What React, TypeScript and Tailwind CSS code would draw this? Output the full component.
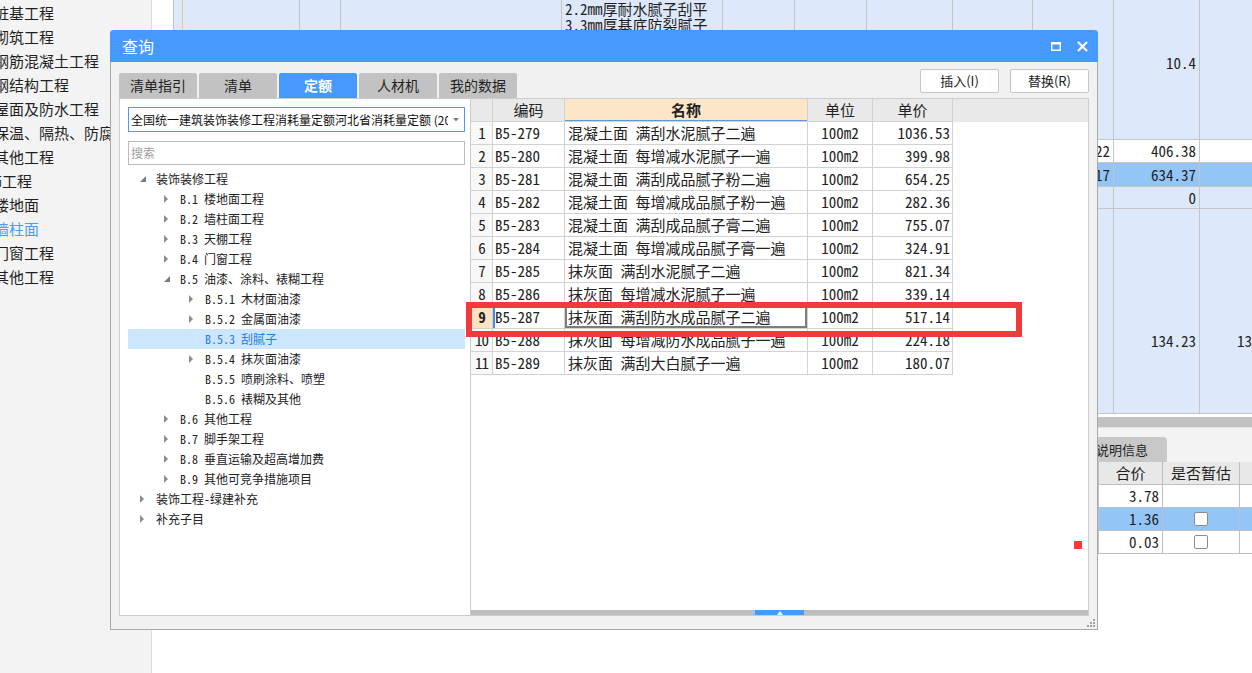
import React from 'react'

const SANS = "font-['Noto_Sans_CJK_SC',sans-serif]"
const MONO = "font-['Noto_Sans_Mono_CJK_SC','Noto_Sans_CJK_SC',monospace]"

// left sidebar items, cut off at the window edge
const SIDEBAR: { t: string; off: string; blue?: boolean }[] = [
  { t: '桩基工程', off: '-ml-[6px]' },
  { t: '砌筑工程', off: '-ml-[6px]' },
  { t: '钢筋混凝土工程', off: '-ml-[6px]' },
  { t: '钢结构工程', off: '-ml-[6px]' },
  { t: '屋面及防水工程', off: '-ml-[6px]' },
  { t: '保温、隔热、防腐', off: '-ml-[6px]' },
  { t: '其他工程', off: '-ml-[6px]' },
  { t: '饰工程', off: '-ml-[13px]' },
  { t: '楼地面', off: '-ml-[6px]' },
  { t: '墙柱面', off: '-ml-[6px]', blue: true },
  { t: '门窗工程', off: '-ml-[6px]' },
  { t: '其他工程', off: '-ml-[6px]' },
]

// background grid behind the dialog
const COLS = ['w-[22px]', 'w-[126px]', 'w-[41px]', 'w-[221px]', 'w-[161px]', 'w-[72px]', 'w-[72px]', 'w-[86px]', 'w-[80px]', 'w-[81px]', 'w-[86px]', 'w-[86px]']

const BG_ROWS: { h: string; bg: string; cells: Record<number, React.ReactNode> }[] = [
  {
    h: 'h-[140px]',
    bg: 'bg-[#dde9fb]',
    cells: {
      4: (
        <div className="pl-[3px] pt-px leading-[16px]">
          <div>2.2mm厚耐水腻子刮平</div>
          <div>3.3mm厚基底防裂腻子</div>
        </div>
      ),
      10: <div className="pt-[52px] pr-[3px] text-right">10.4</div>,
    },
  },
  {
    h: 'h-[23px]',
    bg: 'bg-white',
    cells: {
      9: <div className="pr-[3px] text-right leading-[22px]">5.22</div>,
      10: <div className="pr-[3px] text-right leading-[22px]">406.38</div>,
    },
  },
  {
    h: 'h-[24px]',
    bg: 'bg-[#93c6f6]',
    cells: {
      9: <div className="pr-[3px] text-right leading-[23px]">7.17</div>,
      10: <div className="pr-[3px] text-right leading-[23px]">634.37</div>,
    },
  },
  {
    h: 'h-[22px]',
    bg: 'bg-[#dde9fb]',
    cells: { 10: <div className="pr-[3px] text-right leading-[21px]">0</div> },
  },
  {
    h: 'h-[205px]',
    bg: 'bg-[#dde9fb]',
    cells: {
      10: <div className="pt-[121px] pr-[3px] text-right">134.23</div>,
      11: <div className="pt-[121px] pr-[3px] text-right">134.23</div>,
    },
  },
]

const TREE: { lvl: 0 | 1 | 2; exp: 'open' | 'closed' | 'none'; t: string; sel?: boolean }[] = [
  { lvl: 0, exp: 'open', t: '装饰装修工程' },
  { lvl: 1, exp: 'closed', t: 'B.1 楼地面工程' },
  { lvl: 1, exp: 'closed', t: 'B.2 墙柱面工程' },
  { lvl: 1, exp: 'closed', t: 'B.3 天棚工程' },
  { lvl: 1, exp: 'closed', t: 'B.4 门窗工程' },
  { lvl: 1, exp: 'open', t: 'B.5 油漆、涂料、裱糊工程' },
  { lvl: 2, exp: 'closed', t: 'B.5.1 木材面油漆' },
  { lvl: 2, exp: 'closed', t: 'B.5.2 金属面油漆' },
  { lvl: 2, exp: 'none', t: 'B.5.3 刮腻子', sel: true },
  { lvl: 2, exp: 'closed', t: 'B.5.4 抹灰面油漆' },
  { lvl: 2, exp: 'none', t: 'B.5.5 喷刷涂料、喷塑' },
  { lvl: 2, exp: 'none', t: 'B.5.6 裱糊及其他' },
  { lvl: 1, exp: 'closed', t: 'B.6 其他工程' },
  { lvl: 1, exp: 'closed', t: 'B.7 脚手架工程' },
  { lvl: 1, exp: 'closed', t: 'B.8 垂直运输及超高增加费' },
  { lvl: 1, exp: 'closed', t: 'B.9 其他可竞争措施项目' },
  { lvl: 0, exp: 'closed', t: '装饰工程-绿建补充' },
  { lvl: 0, exp: 'closed', t: '补充子目' },
]

const INDENT = ['pl-[12px]', 'pl-[36px]', 'pl-[61px]']

const QUOTA = [
  ['B5-279', '混凝土面 满刮水泥腻子二遍', '100m2', '1036.53'],
  ['B5-280', '混凝土面 每增减水泥腻子一遍', '100m2', '399.98'],
  ['B5-281', '混凝土面 满刮成品腻子粉二遍', '100m2', '654.25'],
  ['B5-282', '混凝土面 每增减成品腻子粉一遍', '100m2', '282.36'],
  ['B5-283', '混凝土面 满刮成品腻子膏二遍', '100m2', '755.07'],
  ['B5-284', '混凝土面 每增减成品腻子膏一遍', '100m2', '324.91'],
  ['B5-285', '抹灰面 满刮水泥腻子二遍', '100m2', '821.34'],
  ['B5-286', '抹灰面 每增减水泥腻子一遍', '100m2', '339.14'],
  ['B5-287', '抹灰面 满刮防水成品腻子二遍', '100m2', '517.14'],
  ['B5-288', '抹灰面 每增减防水成品腻子一遍', '100m2', '224.18'],
  ['B5-289', '抹灰面 满刮大白腻子一遍', '100m2', '180.07'],
]

const TABS = ['清单指引', '清单', '定额', '人材机', '我的数据']

function Arrow({ exp }: { exp: 'open' | 'closed' | 'none' }) {
  if (exp === 'open')
    return (
      <svg width="6" height="6" viewBox="0 0 6 6">
        <path d="M6 0 L6 6 L0 6 Z" fill="#7b7b7b" />
      </svg>
    )
  if (exp === 'closed')
    return (
      <svg width="5" height="8" viewBox="0 0 5 8">
        <path d="M0 0 L4 4 L0 8 Z" fill="#8c8c8c" />
      </svg>
    )
  return null
}

function Checkbox() {
  return <span className="inline-block w-[14px] h-[14px] rounded-[2px] border border-[#8c8c8c] bg-white" />
}

export default function App() {
  return (
    <div className={`relative w-[1252px] h-[673px] overflow-hidden flex bg-white text-[#1f1f1f] ${SANS}`}>
      {/* sidebar */}
      <div className="w-[152px] shrink-0 h-full bg-[#f3f3f3] border-r border-[#dcdcdc] pt-px overflow-hidden">
        {SIDEBAR.map((s, i) => (
          <div key={i} className={`h-[24px] leading-[24px] text-[15px] whitespace-nowrap ${s.off} ${s.blue ? 'text-[#4b9ef5]' : ''}`}>
            {s.t}
          </div>
        ))}
      </div>

      {/* main area under the dialog */}
      <div className={`flex-1 min-w-0 h-full flex flex-col overflow-hidden text-[15px] ${MONO}`}>
        {BG_ROWS.map((r, ri) => (
          <div key={ri} className={`flex shrink-0 ${r.h}`}>
            {COLS.map((w, ci) => (
              <div
                key={ci}
                className={`${w} shrink-0 h-full border-r border-b border-[#c4c4c4] overflow-hidden whitespace-nowrap ${ci === 0 ? 'bg-white' : r.bg}`}
              >
                {ci === 1 && ri === 0 ? <div className="ml-[8px] h-full border-l border-[#f2c58e]" /> : r.cells[ci]}
              </div>
            ))}
          </div>
        ))}
        <div className="h-[3px] shrink-0 bg-white" />
        <div className="h-[10px] shrink-0 bg-[#c0c0c0]" />
        <div className="h-[10px] shrink-0 bg-[#f3f3f3] border-t border-[#e2e2e2]" />
        <div className="h-[25px] shrink-0 bg-[#f3f3f3] flex">
          <div className="w-[895px] shrink-0" />
          <div className={`w-[120px] shrink-0 bg-[#c8c8c8] rounded-tr-[4px] text-right pr-[19px] text-[13px] leading-[25px] ${SANS}`}>说明信息</div>
        </div>
        <div className="h-[23px] shrink-0 flex bg-[#e8e8e8]">
          <div className="w-[946px] shrink-0 border-b border-[#c0c0c0]" />
          <div className="w-[65px] shrink-0 border-x border-b border-[#c0c0c0] text-center leading-[22px]">合价</div>
          <div className="w-[77px] shrink-0 border-r border-b border-[#c0c0c0] text-center leading-[22px]">是否暂估</div>
          <div className="w-[80px] shrink-0 border-r border-b border-[#c0c0c0]" />
        </div>
        {[
          { v: '3.78', bg: 'bg-white', cb: false },
          { v: '1.36', bg: 'bg-[#93c6f6]', cb: true },
          { v: '0.03', bg: 'bg-white', cb: true },
        ].map((r) => (
          <div key={r.v} className={`h-[23px] shrink-0 flex ${r.bg}`}>
            <div className="w-[946px] shrink-0 border-b border-[#c0c0c0]" />
            <div className="w-[65px] shrink-0 border-x border-b border-[#c0c0c0] text-right pr-[3px] leading-[22px]">{r.v}</div>
            <div className="w-[77px] shrink-0 border-r border-b border-[#c0c0c0] flex items-center justify-center">
              {r.cb && <Checkbox />}
            </div>
            <div className="w-[80px] shrink-0 border-r border-b border-[#c0c0c0]" />
          </div>
        ))}
      </div>

      {/* query dialog */}
      <div className="absolute left-[110px] top-[30px] w-[988px] h-[600px] flex flex-col bg-[#f1f1f1] border-x border-b border-[#a9a9a9] rounded-t-[4px]">
        <div className="-mx-px h-[32px] shrink-0 bg-[#4599ff] rounded-t-[4px] flex items-center pl-[12px] pr-[10px] text-white text-[16px]">
          <span>查询</span>
          <div className="ml-auto flex items-center gap-[16px]">
            <svg width="10" height="9" viewBox="0 0 10 9">
              <rect x="0.75" y="1" width="8.5" height="7.25" fill="none" stroke="#fff" strokeWidth="1.5" />
              <rect x="0" y="0" width="10" height="2.5" fill="#fff" />
            </svg>
            <svg width="11" height="11" viewBox="0 0 11 11">
              <path d="M1 1 L10 10 M10 1 L1 10" stroke="#fff" strokeWidth="2.2" />
            </svg>
          </div>
        </div>

        <div className="flex-1 flex flex-col px-[8px] pt-[7px]">
          <div className="h-[29px] shrink-0 flex">
            <div className="self-end flex gap-[2px]">
              {TABS.map((t) => (
                <div
                  key={t}
                  className={`w-[78px] h-[25px] rounded-t-[2px] flex items-center justify-center text-[14px] ${
                    t === '定额' ? 'bg-[#4599ff] text-white font-bold' : 'bg-[#c2c2c2] text-[#222]'
                  }`}
                >
                  {t}
                </div>
              ))}
            </div>
            <div className="ml-auto self-start flex gap-[11px]">
              <button className="w-[79px] h-[24px] bg-white border border-[#c6c6c6] rounded-[2px] text-[13px] text-[#222]">插入(I)</button>
              <button className="w-[79px] h-[24px] bg-white border border-[#c6c6c6] rounded-[2px] text-[13px] text-[#222]">替换(R)</button>
            </div>
          </div>

          <div className="h-[518px] shrink-0 flex">
            {/* tree panel */}
            <div className="w-[351px] shrink-0 bg-white border-l border-y border-[#cccccc] pl-[8px] pr-[5px] pt-[8px]">
              <div className="h-[25px] flex items-center border border-[#4599ff] bg-white">
                <div className="flex-1 min-w-0 overflow-hidden whitespace-nowrap pl-[2px] text-[12px] text-[#111]">
                  全国统一建筑装饰装修工程消耗量定额河北省消耗量定额 (2012)
                </div>
                <div className="w-[16px] shrink-0 flex items-center justify-center">
                  <svg width="6" height="4" viewBox="0 0 6 4">
                    <path d="M0 0 L6 0 L3 3.5 Z" fill="#7a7a7a" />
                  </svg>
                </div>
              </div>
              <div className="mt-[9px] h-[24px] border border-[#bcbcbc] flex items-center pl-[2px] text-[12px] text-[#a0a0a0]">搜索</div>
              <div className={`mt-[4px] text-[12px] ${MONO}`}>
                {TREE.map((n) => (
                  <div
                    key={n.t}
                    className={`h-[20px] flex items-center whitespace-pre ${INDENT[n.lvl]} ${n.sel ? 'bg-[#cce7fd] text-[#1e7be6]' : 'text-[#222]'}`}
                  >
                    <span className="w-[16px] shrink-0 flex items-center">
                      <Arrow exp={n.exp} />
                    </span>
                    <span>{n.t}</span>
                  </div>
                ))}
              </div>
            </div>

            {/* quota table */}
            <div className={`w-[619px] shrink-0 bg-white border border-[#cccccc] flex flex-col text-[15px] text-[#222] ${MONO}`}>
              <div className="h-[23px] shrink-0 flex bg-[#e9e9e9]">
                <div className="w-[22px] shrink-0 border-r border-b border-[#d2d2d2]" />
                <div className="w-[72px] shrink-0 border-r border-b border-[#d2d2d2] text-center leading-[22px]">编码</div>
                <div className="w-[243px] shrink-0 border-r border-b border-[#d2d2d2] bg-[#fde6c8] shadow-[inset_0_-1px_0_#5b9bd5] text-center font-bold leading-[22px]">名称</div>
                <div className="w-[65px] shrink-0 border-r border-b border-[#d2d2d2] text-center leading-[22px]">单位</div>
                <div className="w-[80px] shrink-0 border-r border-b border-[#d2d2d2] text-center leading-[22px]">单价</div>
              </div>
              {QUOTA.map((r, i) => {
                const sel = i === 8
                return (
                  <div key={r[0]} className="h-[23px] shrink-0 flex">
                    <div
                      className={`w-[22px] shrink-0 border-r border-b border-[#d2d2d2] text-center leading-[22px] tracking-[-1px] ${
                        sel ? 'bg-[#fde3c3] font-bold' : 'bg-[#f8f8f8]'
                      }`}
                    >
                      {i + 1}
                    </div>
                    <div className={`w-[72px] shrink-0 border-r border-b border-[#d2d2d2] pl-[2px] leading-[22px] ${sel ? 'shadow-[inset_2px_0_0_#3d8ef0]' : ''}`}>{r[0]}</div>
                    <div className={`w-[243px] shrink-0 border-r border-b border-[#d2d2d2] pl-[3px] leading-[22px] whitespace-pre ${sel ? 'shadow-[inset_0_0_0_2px_#7d7d7d]' : ''}`}>{r[1]}</div>
                    <div className="w-[65px] shrink-0 border-r border-b border-[#d2d2d2] text-center leading-[22px]">{r[2]}</div>
                    <div className="w-[80px] shrink-0 border-r border-b border-[#d2d2d2] text-right pr-[2px] leading-[22px]">{r[3]}</div>
                  </div>
                )
              })}
              <div className="mt-auto h-[5px] shrink-0 flex bg-[#bdbdbd]">
                <div className="w-[284px] shrink-0" />
                <div className="w-[49px] shrink-0 bg-[#4599ff] flex items-center justify-center">
                  <svg width="6" height="4" viewBox="0 0 6 4">
                    <path d="M3 0 L6 4 L0 4 Z" fill="#fff" />
                  </svg>
                </div>
              </div>
            </div>
          </div>
        </div>

        {/* resize grip */}
        <svg className="absolute right-[2px] bottom-[2px]" width="8" height="8" viewBox="0 0 8 8">
          <rect x="6" y="0" width="2" height="2" fill="#a3a3a3" />
          <rect x="3" y="3" width="2" height="2" fill="#a3a3a3" />
          <rect x="6" y="3" width="2" height="2" fill="#a3a3a3" />
          <rect x="0" y="6" width="2" height="2" fill="#a3a3a3" />
          <rect x="3" y="6" width="2" height="2" fill="#a3a3a3" />
          <rect x="6" y="6" width="2" height="2" fill="#a3a3a3" />
        </svg>
      </div>

      {/* annotations */}
      <div className="absolute left-[466px] top-[302px] w-[556px] h-[35px] border-[6px] border-[#f23a3a]" />
      <div className="absolute left-[1074px] top-[541px] w-[8px] h-[8px] bg-[#f23a3a]" />
    </div>
  )
}
